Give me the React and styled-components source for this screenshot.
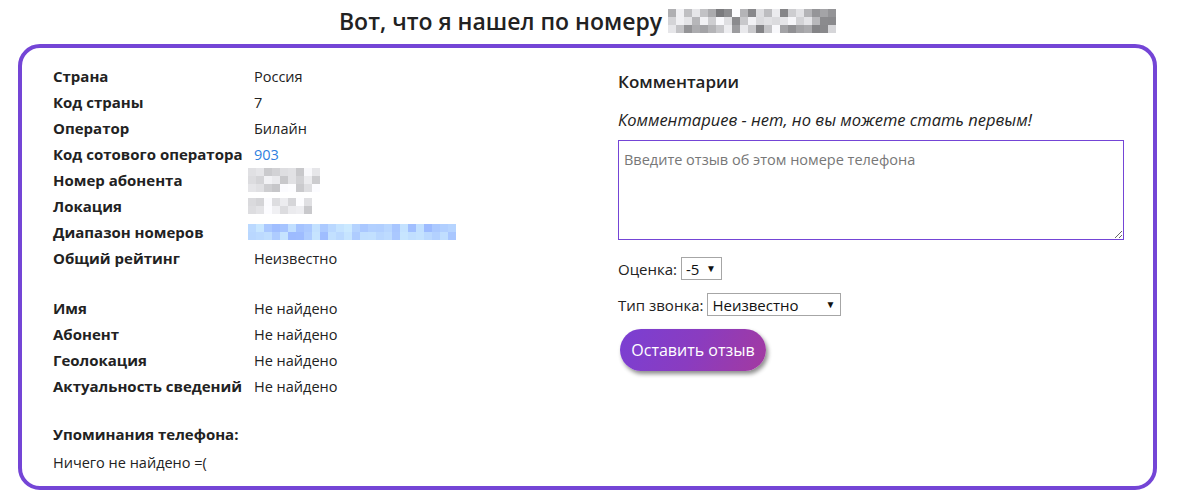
import React from "react";
import styled, { createGlobalStyle } from "styled-components";

const GlobalStyle = createGlobalStyle`
  body {
    margin: 0;
    background: #fff;
    font-family: "Open Sans", "Noto Sans", sans-serif;
    color: #222;
  }
`;

const Page = styled.div`
  width: 1180px;
  padding: 0 23px 4px 18px;
  box-sizing: border-box;
`;

const Title = styled.h1`
  margin: 0;
  height: 44px;
  padding-bottom: 3px;
  box-sizing: border-box;
  display: flex;
  align-items: center;
  justify-content: center;
  font-size: 23px;
  font-weight: 600;
  color: #222;
`;

const Card = styled.div`
  border: 4px solid #7445d6;
  border-radius: 22px;
  padding: 15px 29px 14px 31px;
  display: grid;
  grid-template-columns: 535px 506px;
  column-gap: 30px;
  height: 446px;
  box-sizing: border-box;
`;

const InfoTable = styled.div`
  display: grid;
  grid-template-columns: 201px auto;
  grid-auto-rows: 26px;
  align-items: center;
  font-size: 14.5px;
  margin-bottom: ${(p) => p.$gap || 0}px;
`;

const Label = styled.div`
  font-size: 15px;
  font-weight: 700;
  white-space: nowrap;
`;

const Value = styled.div`
  color: ${(p) => (p.$link ? "#2f7fe0" : "#222")};
  display: flex;
  align-items: center;
  margin-left: ${(p) => p.$shift || 0}px;
`;

const Mentions = styled.div`
  font-size: 15px;
  font-weight: 700;
  margin-bottom: 9px;
`;

const Plain = styled.div`
  font-size: 14.5px;
`;

const Grid = styled.span`
  display: inline-grid;
  grid-template-columns: repeat(${(p) => p.$cols}, 8px);
  grid-auto-rows: 8px;
  vertical-align: middle;
`;

const Cell = styled.span`
  background: ${(p) => p.$c};
`;

const Comments = styled.div`
  padding-top: 7px;
`;

const CommentsTitle = styled.h2`
  margin: 0 0 15px;
  font-size: 17px;
  font-weight: 600;
`;

const Empty = styled.p`
  margin: 0 0 9px;
  font-size: 16.5px;
  font-style: italic;
`;

const Review = styled.textarea`
  display: block;
  width: 506px;
  height: 100px;
  box-sizing: border-box;
  border: 1px solid #7445d6;
  padding: 9px 5px 5px;
  font-family: "Open Sans", "Noto Sans", sans-serif;
  font-size: 14.5px;
  color: #222;
  margin-bottom: 17px;
  &::placeholder {
    color: #777;
  }
`;

const Field = styled.div`
  display: flex;
  align-items: center;
  font-size: 15px;
  margin-bottom: 13px;
  gap: 4px;
`;

const SelectWrap = styled.span`
  position: relative;
  display: inline-block;
`;

const Select = styled.select`
  appearance: none;
  display: block;
  width: ${(p) => p.$w}px;
  height: 23px;
  border: 1px solid #a6a6a6;
  border-radius: 0;
  background: #fff;
  padding: 0 0 0 4px;
  font-family: "Open Sans", "Noto Sans", sans-serif;
  font-size: 15px;
  color: #111;
`;

const Arrow = styled.span`
  position: absolute;
  right: 6px;
  top: 4px;
  font-size: 10px;
  pointer-events: none;
  color: #111;
`;

const Submit = styled.button`
  margin-left: 2px;
  width: 146px;
  height: 42px;
  border: none;
  border-radius: 21px;
  background: linear-gradient(115deg, #7a3fd3 0%, #8a3cc0 50%, #a33aa0 100%);
  box-shadow: 2px 3px 4px rgba(0, 0, 0, 0.45);
  color: #fff;
  font-family: "Open Sans", "Noto Sans", sans-serif;
  font-size: 16px;
  cursor: pointer;
`;

const shade = (seed, base, tint) => {
  const out = [];
  let s = seed;
  return (n) => {
    for (let i = 0; i < n; i++) {
      s = (s * 9301 + 49297) % 233280;
      const r = s / 233280;
      const v = Math.round(base + r * (255 - base));
      out.push(tint ? `rgb(${v - 50},${v - 20},255)` : `rgb(${v},${v},${v + 3})`);
    }
    return out.splice(0);
  };
};

const Mosaic = ({ cols, rows, seed, base, tint }) => {
  const gen = shade(seed, base, tint);
  const cells = gen(cols * rows);
  return (
    <Grid $cols={cols}>
      {cells.map((c, i) => (
        <Cell key={i} $c={c} />
      ))}
    </Grid>
  );
};

const mainInfo = [
  ["Страна", "Россия"],
  ["Код страны", "7"],
  ["Оператор", "Билайн"],
  ["Код сотового оператора", "903", true],
  ["Номер абонента", <Mosaic cols={9} rows={3} seed={7} base={195} />],
  ["Локация", <Mosaic cols={8} rows={2} seed={3} base={200} />],
  ["Диапазон номеров", <Mosaic cols={26} rows={2} seed={11} base={205} tint />],
  ["Общий рейтинг", "Неизвестно"],
];

const extraInfo = [
  ["Имя", "Не найдено"],
  ["Абонент", "Не найдено"],
  ["Геолокация", "Не найдено"],
  ["Актуальность сведений", "Не найдено"],
];

const App = () => (
  <Page>
    <GlobalStyle />
    <Title>
      Вот, что я нашел по номеру&nbsp;
      <Mosaic cols={21} rows={3} seed={5} base={120} />
    </Title>
    <Card>
      <div>
        <InfoTable $gap={24}>
          {mainInfo.map(([label, value, link]) => (
            <React.Fragment key={label}>
              <Label>{label}</Label>
              <Value $link={link} $shift={typeof value === "string" ? 0 : -6}>
                {value}
              </Value>
            </React.Fragment>
          ))}
        </InfoTable>
        <InfoTable $gap={25}>
          {extraInfo.map(([label, value]) => (
            <React.Fragment key={label}>
              <Label>{label}</Label>
              <Value>{value}</Value>
            </React.Fragment>
          ))}
        </InfoTable>
        <Mentions>Упоминания телефона:</Mentions>
        <Plain>Ничего не найдено =(</Plain>
      </div>
      <Comments>
        <CommentsTitle>Комментарии</CommentsTitle>
        <Empty>Комментариев - нет, но вы можете стать первым!</Empty>
        <Review placeholder="Введите отзыв об этом номере телефона" />
        <Field>
          Оценка:
          <SelectWrap>
            <Select $w={41} defaultValue="-5">
              {[-5, -4, -3, -2, -1, 0, 1, 2, 3, 4, 5].map((n) => (
                <option key={n}>{n}</option>
              ))}
            </Select>
            <Arrow>▼</Arrow>
          </SelectWrap>
        </Field>
        <Field>
          Тип звонка:
          <SelectWrap>
            <Select $w={134} defaultValue="Неизвестно">
              <option>Неизвестно</option>
              <option>Реклама</option>
              <option>Мошенники</option>
            </Select>
            <Arrow>▼</Arrow>
          </SelectWrap>
        </Field>
        <Submit>Оставить отзыв</Submit>
      </Comments>
    </Card>
  </Page>
);

export default App;
